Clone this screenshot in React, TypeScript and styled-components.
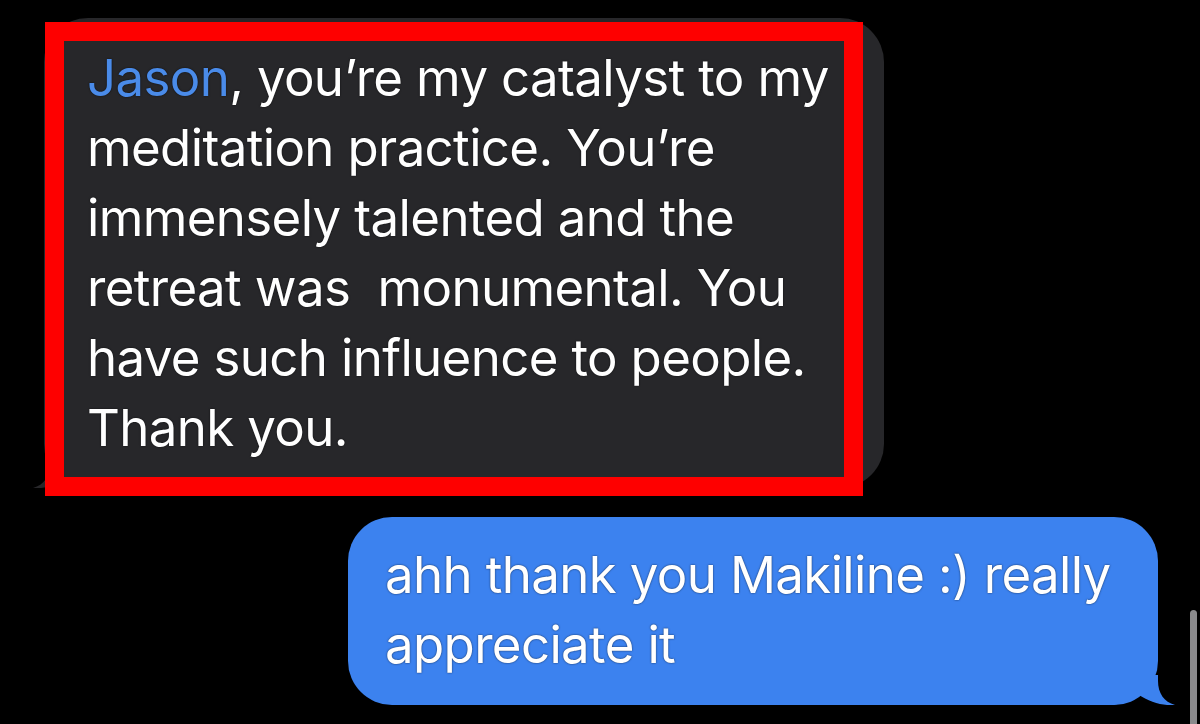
import React from "react";
import styled, { createGlobalStyle } from "styled-components";

const Global = createGlobalStyle`
  html, body { margin: 0; padding: 0; background: #000; }
  body { width: 1200px; height: 724px; overflow: hidden; }
`;

const Screen = styled.div`
  position: relative;
  width: 1200px;
  height: 724px;
  background: #000;
  display: flex;
  flex-direction: column;
  padding-top: 18px;
  box-sizing: border-box;
  gap: 29px;
  font-family: Inter, "Liberation Sans", sans-serif;
`;

const Row = styled.div<{ $side: "left" | "right" }>`
  display: flex;
  justify-content: ${(p) => (p.$side === "left" ? "flex-start" : "flex-end")};
  padding-left: ${(p) => (p.$side === "left" ? "44px" : "0")};
  padding-right: ${(p) => (p.$side === "right" ? "42px" : "0")};
`;

const Bubble = styled.div<{ $kind: "in" | "out" }>`
  position: relative;
  box-sizing: border-box;
  width: ${(p) => (p.$kind === "in" ? "840px" : "810px")};
  background: ${(p) => (p.$kind === "in" ? "#27272a" : "#3c82ef")};
  border-radius: 44px;
  padding: ${(p) => (p.$kind === "in" ? "25px 20px 25px 43px" : "23px 20px 25px 37px")};
  color: #fff;
  font-size: 51px;
  line-height: 70px;
  letter-spacing: -0.65px;
  text-shadow: 0 0 2px rgba(0, 0, 0, 0.7);
  z-index: 1;
`;

const Line = styled.div`
  white-space: pre;
`;

const Name = styled.span`
  color: #4a8be9;
`;

const Tail = styled.svg<{ $kind: "in" | "out" }>`
  position: absolute;
  bottom: 0;
  width: 67px;
  height: 30px;
  ${(p) =>
    p.$kind === "out"
      ? "right: -17px;"
      : "left: -11px; transform: scaleX(-1);"}
`;

const Annotation = styled.div`
  position: absolute;
  left: 1px;
  top: 4px;
  right: 21px;
  bottom: -8px;
  border: 19px solid #fe0000;
  pointer-events: none;
`;

const Scroller = styled.div`
  position: absolute;
  right: 3px;
  top: 610px;
  width: 7px;
  height: 130px;
  border-radius: 4px;
  background: #8a8a8c;
`;

const tailPath =
  "M0,0 H50 V6 C50,18 56,27 67,30 C57,31 42,28 30,19 C22,26 12,30 0,30 Z";

export default function App() {
  return (
    <>
      <Global />
      <Screen>
        <Row $side="left">
          <Bubble $kind="in">
            <Tail $kind="in" viewBox="0 0 67 30">
              <path d={tailPath} fill="#27272a" />
            </Tail>
            <Line>
              <Name>Jason</Name>, you’re my catalyst to my
            </Line>
            <Line>meditation practice. You’re</Line>
            <Line>immensely talented and the</Line>
            <Line>retreat was  monumental. You</Line>
            <Line>have such influence to people.</Line>
            <Line>Thank you.</Line>
            <Annotation />
          </Bubble>
        </Row>
        <Row $side="right">
          <Bubble $kind="out">
            <Tail $kind="out" viewBox="0 0 67 30">
              <path d={tailPath} fill="#3c82ef" />
            </Tail>
            <Line>ahh thank you Makiline :) really</Line>
            <Line>appreciate it</Line>
          </Bubble>
        </Row>
        <Scroller />
      </Screen>
    </>
  );
}
